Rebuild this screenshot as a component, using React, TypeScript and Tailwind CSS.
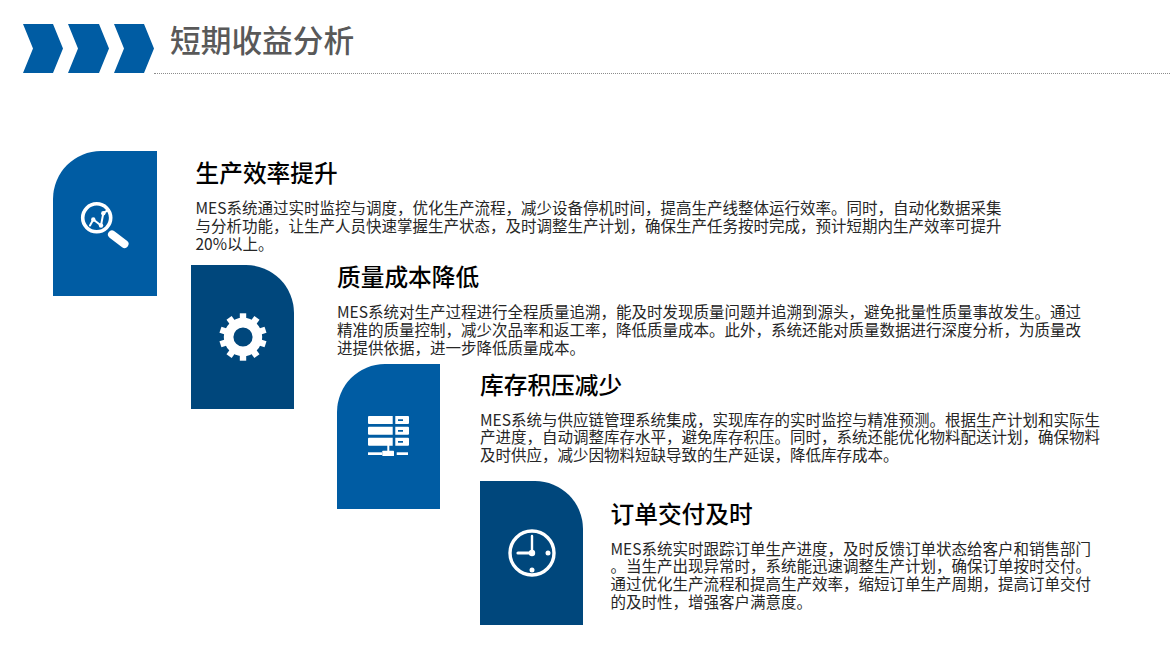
const blue = 'bg-[#005ca3]';
const navy = 'bg-[#00477c]';

const SearchIcon = () => (
    <svg width="56" height="56" viewBox="0 0 56 56" fill="none" stroke="#fff" strokeLinecap="round" strokeLinejoin="round">
        <circle cx="19.7" cy="21.8" r="14" strokeWidth="3.6" />
        <path d="M35 38.5 L47.5 48" strokeWidth="8" />
        <path d="M13 29.5 L16.3 23.5 L24 29.5 L26.3 17.2 L31.3 13.8" strokeWidth="2" />
        <g fill="#fff" stroke="none">
            <circle cx="16.3" cy="23.5" r="2.2" />
            <circle cx="24" cy="29.5" r="2.2" />
            <circle cx="26.3" cy="17.2" r="2.2" />
        </g>
    </svg>
);

const GearIcon = () => (
    <svg width="50" height="50" viewBox="0 0 50 50">
        <g fill="#fff">
            {[0, 36, 72, 108, 144, 180, 216, 252, 288, 324].map(a => (
                <rect key={a} x="21.8" y="1.3" width="6.4" height="9" transform={`rotate(${a} 25 25)`} />
            ))}
        </g>
        <circle cx="25" cy="25" r="14.4" fill="none" stroke="#fff" strokeWidth="9.6" />
    </svg>
);

const ServerIcon = () => (
    <svg width="42" height="42" viewBox="0 0 42 42" fill="#fff">
        <path fillRule="evenodd" d="M1 0h23.7v8H1a1 1 0 0 1-1-1V1a1 1 0 0 1 1-1zM27.3 0H40a1 1 0 0 1 1 1v6a1 1 0 0 1-1 1H27.3zM30 3.3v1.7h5V3.3z" />
        <path fillRule="evenodd" d="M1 10.7h23.7v8H1a1 1 0 0 1-1-1v-6a1 1 0 0 1 1-1zM27.3 10.7H40a1 1 0 0 1 1 1v6a1 1 0 0 1-1 1H27.3zM30 14v1.7h5V14z" />
        <path fillRule="evenodd" d="M1 21.7h23.7v8H1a1 1 0 0 1-1-1v-6a1 1 0 0 1 1-1zM27.3 21.7H40a1 1 0 0 1 1 1v6a1 1 0 0 1-1 1H27.3zM30 25v1.7h5V25z" />
        <rect x="19.3" y="29" width="2" height="7" />
        <rect x="0" y="36.3" width="14.3" height="2.7" />
        <rect x="14.3" y="34.7" width="11.7" height="5.3" rx="0.6" />
        <rect x="28.7" y="36.3" width="11.3" height="2.7" />
    </svg>
);

const ClockIcon = () => (
    <svg width="50" height="50" viewBox="0 0 50 50" fill="none" stroke="#fff" strokeLinecap="round">
        <circle cx="25" cy="25" r="22" strokeWidth="3.4" />
        <path d="M25 8 V25" strokeWidth="2.4" />
        <path d="M11 25 H25" strokeWidth="3.2" />
        <g fill="#fff" stroke="none">
            <circle cx="25" cy="25" r="3.2" />
            <circle cx="41" cy="25" r="2.5" />
            <circle cx="25" cy="42" r="2.5" />
        </g>
    </svg>
);

const blocks = [
    {
        title: '生产效率提升',
        lines: [
            'MES系统通过实时监控与调度，优化生产流程，减少设备停机时间，提高生产线整体运行效率。同时，自动化数据采集',
            '与分析功能，让生产人员快速掌握生产状态，及时调整生产计划，确保生产任务按时完成，预计短期内生产效率可提升',
            '20%以上。',
        ],
        icon: <SearchIcon />,
        row: 'mt-[77px] ml-[53px]',
        card: `${blue} w-[104px] h-[145px] rounded-tl-[48px]`,
        text: 'ml-[38.5px] pt-[3px]',
    },
    {
        title: '质量成本降低',
        lines: [
            'MES系统对生产过程进行全程质量追溯，能及时发现质量问题并追溯到源头，避免批量性质量事故发生。通过',
            '精准的质量控制，减少次品率和返工率，降低质量成本。此外，系统还能对质量数据进行深度分析，为质量改',
            '进提供依据，进一步降低质量成本。',
        ],
        icon: <GearIcon />,
        row: '-mt-[31px] ml-[191px]',
        card: `${navy} w-[103px] h-[144px] rounded-tr-[48px]`,
        text: 'ml-[43px] -mt-[7px]',
    },
    {
        title: '库存积压减少',
        lines: [
            'MES系统与供应链管理系统集成，实现库存的实时监控与精准预测。根据生产计划和实际生',
            '产进度，自动调整库存水平，避免库存积压。同时，系统还能优化物料配送计划，确保物料',
            '及时供应，减少因物料短缺导致的生产延误，降低库存成本。',
        ],
        icon: <ServerIcon />,
        row: '-mt-[45px] ml-[337px]',
        card: `${blue} w-[103px] h-[145px] rounded-tl-[48px]`,
        text: 'ml-[40px] pt-[1.5px]',
    },
    {
        title: '订单交付及时',
        lines: [
            'MES系统实时跟踪订单生产进度，及时反馈订单状态给客户和销售部门',
            '。当生产出现异常时，系统能迅速调整生产计划，确保订单按时交付。',
            '通过优化生产流程和提高生产效率，缩短订单生产周期，提高订单交付',
            '的及时性，增强客户满意度。',
        ],
        icon: <ClockIcon />,
        row: '-mt-[28px] ml-[480px]',
        card: `${navy} w-[103px] h-[144px] rounded-tr-[48px]`,
        text: 'ml-[27.5px] pt-[13.5px]',
    },
];

export default function App() {
    return (
        <div className="w-[1170px] h-[658px] overflow-hidden bg-white font-['Noto_Sans_CJK_SC','Noto_Sans',sans-serif]">
            <header className="flex items-end h-[74px] pl-[23px]">
                <svg width="131" height="49" viewBox="0 0 131 49" fill="#005ca3" className="shrink-0 mb-[1px]">
                    <path d="M0 0H30L40 24.5L30 49H0L10 24.5Z" />
                    <path d="M45 0H76L86 24.5L76 49H45L55 24.5Z" />
                    <path d="M91 0H121L131 24.5L121 49H91L101 24.5Z" />
                </svg>
                <div className="flex-1 h-full flex flex-col justify-end">
                    <h1 className="pl-[16px] pb-[14px] text-[30.7px] leading-[40px] font-medium text-[#595959] whitespace-nowrap">短期收益分析</h1>
                    <div className="border-b border-dotted border-[#8c8c8c]" />
                </div>
            </header>
            {blocks.map(b => (
                <section key={b.title} className={`flex items-start ${b.row}`}>
                    <div className={`shrink-0 flex items-center justify-center ${b.card}`}>{b.icon}</div>
                    <div className={b.text}>
                        <h2 className="text-[23.7px] leading-[36px] font-medium text-black whitespace-nowrap">{b.title}</h2>
                        <div className="mt-[9px] text-[15.5px] leading-[17.8px] text-[#262626]">
                            {b.lines.map(l => (
                                <p key={l} className="whitespace-nowrap">{l}</p>
                            ))}
                        </div>
                    </div>
                </section>
            ))}
        </div>
    );
}
